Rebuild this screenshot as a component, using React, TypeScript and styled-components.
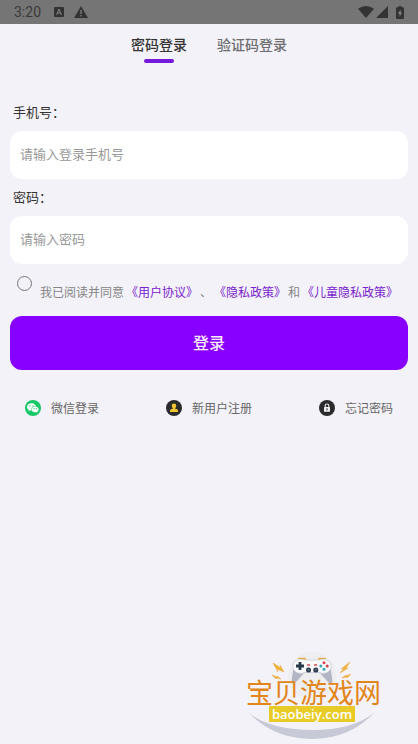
import React, { useState } from 'react';
import styled, { createGlobalStyle } from 'styled-components';

const GlobalStyle = createGlobalStyle`
  * { box-sizing: border-box; }
  body {
    margin: 0;
    background: #f3f2f8;
    font-family: "Noto Sans CJK SC", sans-serif;
  }
  button, input { font-family: inherit; }
`;

const Page = styled.div`
  position: relative;
  display: flex;
  flex-direction: column;
  min-height: 100vh;
  overflow: hidden;
`;

const StatusBar = styled.header`
  display: flex;
  align-items: center;
  justify-content: space-between;
  height: 24px;
  padding: 0 14px;
  background: #757575;
  color: #3a3a3a;
  font: 14px/24px Roboto, sans-serif;
`;

const StatusGroup = styled.div<{ $gap: number }>`
  display: flex;
  align-items: center;
  gap: ${({ $gap }) => $gap}px;

  svg { display: block; }
`;

const Tabs = styled.nav`
  display: flex;
  justify-content: center;
  gap: 30px;
  height: 70px;
  padding-top: 9px;
`;

const Tab = styled.button<{ $active: boolean }>`
  display: flex;
  flex-direction: column;
  align-items: center;
  align-self: flex-start;
  gap: 4px;
  padding: 0;
  border: 0;
  background: none;
  color: ${({ $active }) => ($active ? '#333' : '#6e6e70')};
  font-size: 14px;
  font-weight: 500;
  line-height: 22px;
  cursor: pointer;

  &::after {
    content: "";
    width: 30px;
    height: 4px;
    border-radius: 2px;
    background: ${({ $active }) => ($active ? '#7418db' : 'transparent')};
  }
`;

const Form = styled.form`
  display: flex;
  flex-direction: column;
  padding: 0 10px;
`;

const Label = styled.label`
  padding: 0 0 2px 3px;
  color: #333;
  font-size: 13px;
  line-height: 35px;
`;

const Field = styled.input`
  width: 100%;
  height: 48px;
  padding: 0 10px 4px;
  border: 0;
  border-radius: 12px;
  background: #fff;
  color: #333;
  font-size: 13px;
  outline: none;

  &::placeholder { color: #999; opacity: 1; }
`;

const Agreement = styled.div`
  display: flex;
  align-items: flex-start;
  gap: 8px;
  height: 52px;
  padding: 12px 0 0 7px;
`;

const Check = styled.input`
  flex: none;
  width: 15px;
  height: 15px;
  margin: 0;
  appearance: none;
  border: 1px solid #77777b;
  border-radius: 50%;
  cursor: pointer;

  &:checked { background: #8a00ff; }
`;

const Terms = styled.div`
  display: flex;
  gap: 2px;
  padding-top: 7px;
  color: #858587;
  font-size: 12px;
  line-height: 18px;
  white-space: nowrap;

  a { color: #7a22cf; text-decoration: none; }
`;

const Submit = styled.button`
  height: 54px;
  padding: 0 0 2px;
  border: 0;
  border-radius: 12px;
  background: #8800ff;
  color: #f7e9ff;
  font-size: 16px;
  font-weight: 500;
  cursor: pointer;
`;

const Links = styled.nav`
  display: flex;
  justify-content: space-between;
  padding: 28px 25px 0;
`;

const IconLink = styled.a`
  display: flex;
  align-items: center;
  gap: 10px;
  color: #666;
  font-size: 12px;
  line-height: 20px;
  text-decoration: none;
`;

const Watermark = styled.div`
  position: absolute;
  right: 20px;
  bottom: 0;
  display: flex;
  flex-direction: column;
  align-items: center;
  width: 160px;
  height: 99px;
  padding-top: 32px;
  pointer-events: none;

  svg { position: absolute; inset: 0; }
`;

const SiteName = styled.div`
  position: relative;
  margin-right: 9px;
  color: #e2851a;
  font-size: 27px;
  font-weight: 400;
  line-height: 29px;
  white-space: nowrap;
`;

const SiteUrl = styled.div`
  position: relative;
  width: 86px;
  margin-right: 12px;
  background: #e9cb28;
  color: #fff;
  font: 600 13px/16px "Open Sans", sans-serif;
  text-align: center;
`;

const KeyboardIcon = () => (
  <svg width="10" height="10" viewBox="0 0 10 10" aria-hidden="true">
    <rect width="10" height="10" rx="1" fill="#333" />
    <path d="M2.6 8 5 2l2.4 6M3.5 6h3" fill="none" stroke="#858585" />
  </svg>
);

const WarningIcon = () => (
  <svg width="14" height="12" viewBox="0 0 14 12" aria-hidden="true">
    <path d="M7 0 14 12H0z" fill="#333" />
    <path d="M7 4v4M7 9v1.5" stroke="#858585" strokeWidth="1.2" />
  </svg>
);

const WifiIcon = () => (
  <svg width="16" height="12" viewBox="0 0 16 12" aria-hidden="true">
    <path d="M0 2.8Q8-2.8 16 2.8L8 12z" fill="#333" />
  </svg>
);

const SignalIcon = () => (
  <svg width="12" height="12" viewBox="0 0 12 12" aria-hidden="true">
    <path d="M12 0v12H0z" fill="#333" />
  </svg>
);

const BatteryIcon = () => (
  <svg width="8" height="13" viewBox="0 0 8 13" aria-hidden="true">
    <path d="M2.5 0h3v1.3H7a1 1 0 0 1 1 1V12a1 1 0 0 1-1 1H1a1 1 0 0 1-1-1V2.3a1 1 0 0 1 1-1h1.5z" fill="#333" />
    <path d="M4.6 3.5 2 7.8h1.6v3L6 6.600H4.600z" fill="#858585" />
  </svg>
);

const WechatIcon = () => (
  <svg width="16" height="16" viewBox="0 0 16 16" aria-hidden="true">
    <circle cx="8" cy="8" r="8" fill="#16c768" />
    <path d="M6.6 3.2C4 3.200 2 4.800 2 6.900c0 1.100.6 2 1.600 2.700l-.4 1.500 1.800-.9c.5.1 1 .2 1.600.2 2.500 0 4.500-1.600 4.500-3.500S9.100 3.200 6.600 3.200z" fill="#fff" />
    <path d="M10.200 6.300c-2.100 0-3.800 1.400-3.800 3.100s1.700 3.100 3.800 3.100c.4 0 .9-.1 1.200-.2l1.400.8-.3-1.400c.9-.5 1.400-1.400 1.400-2.300 0-1.700-1.600-3.100-3.700-3.100z" fill="#fff" stroke="#16c768" strokeWidth=".5" />
    <g fill="#16c768">
      <circle cx="5" cy="5.900" r=".7" />
      <circle cx="8" cy="5.900" r=".7" />
      <circle cx="9" cy="8.700" r=".6" />
      <circle cx="11.400" cy="8.700" r=".6" />
    </g>
  </svg>
);

const UserIcon = () => (
  <svg width="16" height="16" viewBox="0 0 16 16" aria-hidden="true">
    <circle cx="8" cy="8" r="8" fill="#2b2b2d" />
    <circle cx="8" cy="5.900" r="2.300" fill="#f0c52e" />
    <path d="M4 12V10.500Q4 9 7 8.600V7h2v1.600Q12 9 12 10.500V12z" fill="#f0c52e" />
  </svg>
);

const LockIcon = () => (
  <svg width="16" height="16" viewBox="0 0 16 16" aria-hidden="true">
    <circle cx="8" cy="8" r="8" fill="#2b2b2d" />
    <path d="M6.200 7.300V5.800a1.800 1.800 0 0 1 3.600 0v1.500" fill="none" stroke="#eee" strokeWidth="1.100" />
    <rect x="5" y="7" width="6" height="4.800" rx=".5" fill="#eee" />
    <path d="M8 8.300v2" stroke="#2b2b2d" />
  </svg>
);

const GamepadArt = () => (
  <svg width="160" height="99" viewBox="0 0 160 99" aria-hidden="true">
    <circle cx="74" cy="31" r="24" fill="#eeeef0" />
    <path d="M11 68Q36 94 74 94T137 67Q116 85 74 85T11 68z" fill="#c7c9d6" />
    <path d="M61 13.700h6M81 13.700h6" stroke="#e8ad3f" strokeWidth="2" strokeLinecap="round" />
    <path d="M56 19 53.500 36Q54 41 59 36L66 28H82L89 36Q94 41 94.500 36L92 19z" fill="#b3b5c5" />
    <path d="M58 15.500Q62 13 67 15H81Q86 13 90 15.500C95 19 94 26 88 28Q85 29 81 27.500H67Q63 29 60 28C54 26 53 19 58 15.500z" fill="#f9f9fc" stroke="#c4c6d4" strokeWidth=".6" />
    <path d="M62 17v8M58 21h8" stroke="#263748" strokeWidth="2.800" />
    <circle cx="70.500" cy="25" r="2.500" fill="#263748" />
    <circle cx="77.800" cy="25" r="2.500" fill="#263748" />
    <circle cx="70.500" cy="24.700" r="1" fill="#62788d" />
    <circle cx="77.800" cy="24.700" r="1" fill="#62788d" />
    <path d="M69 20h3M76 20h3" stroke="#d64c56" strokeWidth="1.300" />
    <circle cx="86" cy="17.800" r="1.500" fill="#df4351" />
    <circle cx="86" cy="24.200" r="1.500" fill="#36a7b5" />
    <circle cx="82.800" cy="21" r="1.500" fill="#36a7b5" />
    <circle cx="89.200" cy="21" r="1.500" fill="#db3d49" />
    <g fill="#f1b537" stroke="#e79c2d" strokeWidth=".4">
      <path d="M35 18 43 23 42 20 46 27 39 24 40 27z" />
      <path d="M112 17 103 24l3-1-4 5 8-5-2 0z" />
      <path d="m34 30 5 2v-1l4 3-5-1v1zM113 29l-5 2v-1l-4 3 5-1v1z" />
    </g>
  </svg>
);

export default function App() {
  const [tab, setTab] = useState(0);

  return (
    <>
      <GlobalStyle />
      <Page>
        <StatusBar>
          <StatusGroup $gap={13}>
            <span>3:20</span>
            <StatusGroup $gap={10}>
              <KeyboardIcon />
              <WarningIcon />
            </StatusGroup>
          </StatusGroup>
          <StatusGroup $gap={8}>
            <StatusGroup $gap={2}>
              <WifiIcon />
              <SignalIcon />
            </StatusGroup>
            <BatteryIcon />
          </StatusGroup>
        </StatusBar>
        <Tabs>
          {['密码登录', '验证码登录'].map((name, index) => (
            <Tab key={name} type="button" $active={tab === index} onClick={() => setTab(index)}>
              {name}
            </Tab>
          ))}
        </Tabs>
        <Form onSubmit={(event: React.FormEvent) => event.preventDefault()}>
          <Label htmlFor="phone">手机号：</Label>
          <Field id="phone" type="tel" placeholder="请输入登录手机号" />
          <Label htmlFor="password">密码：</Label>
          <Field id="password" type="password" placeholder="请输入密码" />
          <Agreement>
            <Check id="agree" type="checkbox" />
            <Terms>
              <label htmlFor="agree">我已阅读并同意</label>
              <a href="#terms">《用户协议》</a>
              <span>、</span>
              <a href="#privacy">《隐私政策》</a>
              <span>和</span>
              <a href="#children">《儿童隐私政策》</a>
            </Terms>
          </Agreement>
          <Submit type="submit">登录</Submit>
        </Form>
        <Links>
          <IconLink href="#wechat"><WechatIcon />微信登录</IconLink>
          <IconLink href="#register"><UserIcon />新用户注册</IconLink>
          <IconLink href="#forgot"><LockIcon />忘记密码</IconLink>
        </Links>
        <Watermark>
          <GamepadArt />
          <SiteName>宝贝游戏网</SiteName>
          <SiteUrl>baobeiy.com</SiteUrl>
        </Watermark>
      </Page>
    </>
  );
}
